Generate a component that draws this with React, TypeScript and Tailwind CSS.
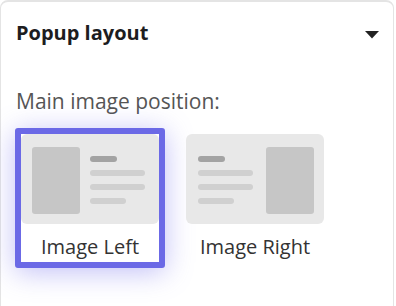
import React from "react";

function Preview({ right }: { right?: boolean }) {
  const block = <div className="w-[48px] h-[67px] rounded-[3px] bg-[#c6c6c6] shrink-0" />;
  const lines = (
    <div className="flex flex-col gap-[8px] pt-[9px]">
      <div className="w-[27px] h-[6px] rounded-full bg-[#a3a3a3]" />
      <div className="w-[55px] h-[6px] rounded-full bg-[#d0d0d0]" />
      <div className="w-[55px] h-[6px] rounded-full bg-[#d0d0d0]" />
      <div className="w-[36px] h-[6px] rounded-full bg-[#d0d0d0]" />
    </div>
  );
  return (
    <div className="w-[138px] h-[90px] rounded-[6px] bg-[#e8e8e8] flex items-start pt-[13px] shrink-0">
      {right ? (
        <div className="flex w-full pl-[12px] pr-[10px] justify-between">
          {lines}
          {block}
        </div>
      ) : (
        <div className="flex w-full pl-[11px] gap-[10px]">
          {block}
          {lines}
        </div>
      )}
    </div>
  );
}

export default function App() {
  return (
    <div
      className="w-[396px] h-[306px] bg-white overflow-hidden"
      style={{ fontFamily: '"Open Sans", "Noto Sans", sans-serif' }}
    >
      <div className="w-[394px] h-[320px] border border-t-2 border-[#e4e4e4] rounded-t-[8px] pl-[14px] pr-[13px]">
        <div className="flex items-center justify-between pt-[17px]">
          <span className="text-[20px] leading-[28px] font-bold text-[#1d1d1f] pl-[1px]">Popup layout</span>
          <svg width="14" height="8" viewBox="0 0 14 8" className="mt-[3px] mr-[1px]">
            <path d="M0 0 L14 0 L7 7.5 Z" fill="#222" />
          </svg>
        </div>
        <div className="mt-[40px] text-[21px] leading-[28px] text-[#555] pl-[1px]">Main image position:</div>
        <div className="flex gap-[15px] mt-[13px]">
          <div className="w-[150px] h-[140px] border-[6px] border-[#6b69e6] rounded-[3px] bg-white flex flex-col items-center shadow-[0_4px_28px_rgba(99,96,235,0.4)]">
            <Preview />
            <div className="mt-[10px] text-[20px] leading-[26px] text-[#333]">Image Left</div>
          </div>
          <div className="w-[150px] h-[140px] border-[6px] border-transparent flex flex-col items-center">
            <Preview right />
            <div className="mt-[10px] text-[20px] leading-[26px] text-[#333]">Image Right</div>
          </div>
        </div>
      </div>
    </div>
  );
}
